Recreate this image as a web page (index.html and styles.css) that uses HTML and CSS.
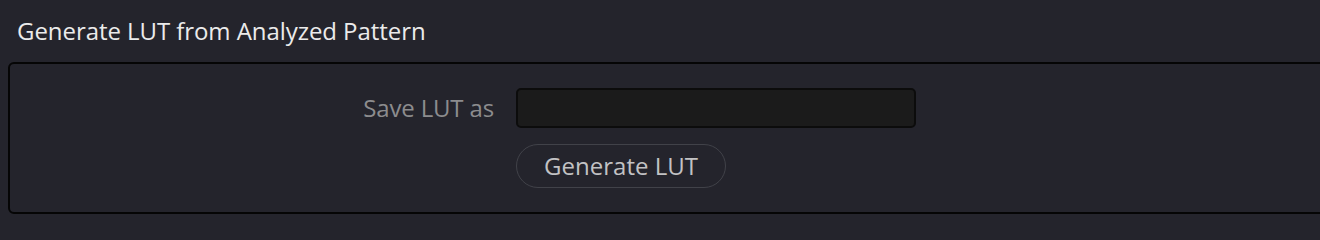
FILE: index.html
```html
<!DOCTYPE html>
<html lang="en">
<head>
<meta charset="utf-8">
<title>Generate LUT from Analyzed Pattern</title>
<link rel="stylesheet" href="styles.css">
</head>
<body>
<div class="page">
  <div class="section-title">Generate LUT from Analyzed Pattern</div>
  <div class="panel">
    <div class="form-grid">
      <label class="field-label" for="lutname">Save LUT as</label>
      <input class="text-input" id="lutname" type="text">
      <div class="spacer"></div>
      <div class="actions">
        <button class="pill-btn" type="button">Generate LUT</button>
      </div>
    </div>
  </div>
</div>
</body>
</html>
```
FILE: styles.css
```css
html, body {
  margin: 0;
  padding: 0;
  background: #24242c;
  overflow: hidden;
}

.page {
  width: 1320px;
  height: 228px;
  font-family: "Open Sans", "Noto Sans", sans-serif;
}

.section-title {
  font-size: 24px;
  line-height: 32px;
  color: #ebebeb;
  padding: 15px 0 0 17px;
  height: 32px;
  letter-spacing: -0.06px;
}

.panel {
  margin: 15px 0 0 8px;
  width: 1340px;
  height: 148px;
  border: 2px solid #050505;
  border-radius: 6px;
  box-sizing: content-box;
  padding: 0;
}

.form-grid {
  display: grid;
  grid-template-columns: 484px 400px;
  column-gap: 22px;
  row-gap: 16px;
  padding-top: 24px;
  align-items: center;
}

.field-label {
  font-size: 24px;
  color: #8c8c8e;
  text-align: right;
  line-height: 32px;
  letter-spacing: -0.15px;
}

.text-input {
  width: 400px;
  height: 40px;
  box-sizing: border-box;
  background: #1b1b1b;
  border: 2px solid #0c0c0c;
  border-radius: 5px;
  outline: none;
  margin: 0;
  padding: 0 8px;
  color: #ccc;
  font-family: inherit;
  font-size: 22px;
}

.actions {
  display: flex;
}

.pill-btn {
  width: 210px;
  height: 44px;
  box-sizing: border-box;
  border: 1.5px solid #414249;
  border-radius: 22px;
  background: #24242c;
  color: #c2c2c4;
  font-family: "Open Sans", "Noto Sans", sans-serif;
  font-size: 24px;
  line-height: 32px;
  padding: 0;
  margin: 0;
}
```
